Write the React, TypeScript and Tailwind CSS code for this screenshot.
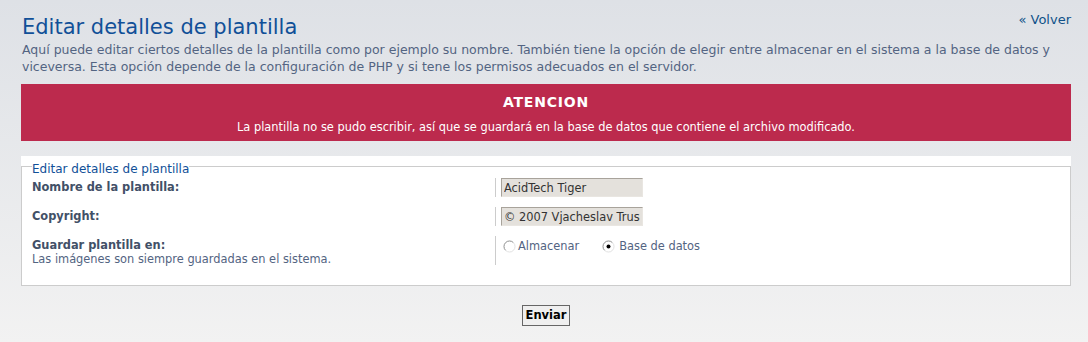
import React from 'react'

function Radio({ checked }: { checked?: boolean }) {
  return (
    <svg width="13" height="13" viewBox="0 0 13 13" className="shrink-0">
      <circle cx="6.5" cy="6.5" r="5.5" fill="#ffffff" />
      <path d="M2.6 10.4 A5.5 5.5 0 0 1 10.4 2.6" fill="none" stroke="#8e8f8f" strokeWidth="1" />
      <path d="M10.4 2.6 A5.5 5.5 0 0 1 2.6 10.4" fill="none" stroke="#e2e2e2" strokeWidth="1" />
      {checked && <circle cx="6.5" cy="6.5" r="2" fill="#000000" />}
    </svg>
  )
}

function Row({
  label,
  explain,
  children,
}: {
  label: string
  explain?: string
  children: React.ReactNode
}) {
  return (
    <div className="flex">
      <div className="w-[463px] shrink-0 pt-[2px]">
        <div className="text-[11.4px] leading-[15px] font-bold text-[#425067]">{label}</div>
        {explain && <div className="text-[11.4px] leading-[12px] text-[#536482]">{explain}</div>}
      </div>
      <div className="border-l border-[#cccccc] pl-[5px]">{children}</div>
    </div>
  )
}

function TextBox({ value }: { value: string }) {
  return (
    <input
      readOnly
      defaultValue={value}
      className="block w-[142px] h-[19px] px-[2px] bg-[#e4e1dc] border border-t-[#a8a39b] border-l-[#a8a39b] border-b-[#e9e6e1] border-r-[#e9e6e1] text-[11.4px] text-[#333333] outline-none"
    />
  )
}

export default function App() {
  return (
    <div className="min-h-[342px] bg-gradient-to-b from-[#dee1e6] to-[#f2f2f2] pl-[21px] pr-[17px] pt-[13px] pb-[17px] font-['DejaVu_Sans',sans-serif]">
      <div className="flex items-start justify-between">
        <h1 className="mt-[2px] pl-[1px] text-[21px] leading-[24px] font-normal text-[#115098]">
          Editar detalles de plantilla
        </h1>
        <a href="#" className="text-[13px] leading-[14px] text-[#105289]">
          « Volver
        </a>
      </div>
      <p className="mt-[3px] pl-[1px] text-[12.5px] leading-[16.5px] text-[#536482]">
        Aquí puede editar ciertos detalles de la plantilla como por ejemplo su nombre. También tiene la opción de elegir entre
        almacenar en el sistema a la base de datos y viceversa. Esta opción depende de la configuración de PHP y si tene los
        permisos adecuados en el servidor.
      </p>

      <div className="mt-[9px] bg-[#bc2a4d] pt-[9px] pb-[6px] text-center text-white">
        <h3 className="text-[14px] leading-[18px] font-bold tracking-[0.8px]">ATENCION</h3>
        <p className="mt-[8px] text-[11.4px] leading-[16px]">
          La plantilla no se pudo escribir, así que se guardará en la base de datos que contiene el archivo modificado.
        </p>
      </div>

      <div className="mt-[15px] bg-white pt-[2px]">
        <fieldset className="border border-[#cccccc] px-[10px] pb-[20px]">
          <legend className="pt-[5px] text-[12px] leading-[12px] text-[#115098]">Editar detalles de plantilla</legend>
          <div className="mt-[3px] flex flex-col gap-[10px]">
            <Row label="Nombre de la plantilla:">
              <TextBox value="AcidTech Tiger" />
            </Row>
            <Row label="Copyright:">
              <TextBox value="© 2007 Vjacheslav Trushkin" />
            </Row>
            <Row label="Guardar plantilla en:" explain="Las imágenes son siempre guardadas en el sistema.">
              <div className="flex items-center gap-[23px] pt-[4px] text-[11.4px] leading-[13px] text-[#536482]">
                <label className="flex items-center gap-[2px] pl-[2px]">
                  <Radio />
                  Almacenar
                </label>
                <label className="flex items-center gap-[4px]">
                  <Radio checked />
                  Base de datos
                </label>
              </div>
            </Row>
          </div>
        </fieldset>
      </div>

      <div className="mt-[19px] flex justify-center">
        <button className="h-[21px] border border-[#666666] bg-[#efefef] px-[3px] text-[11.5px] font-bold text-black">
          Enviar
        </button>
      </div>
    </div>
  )
}
